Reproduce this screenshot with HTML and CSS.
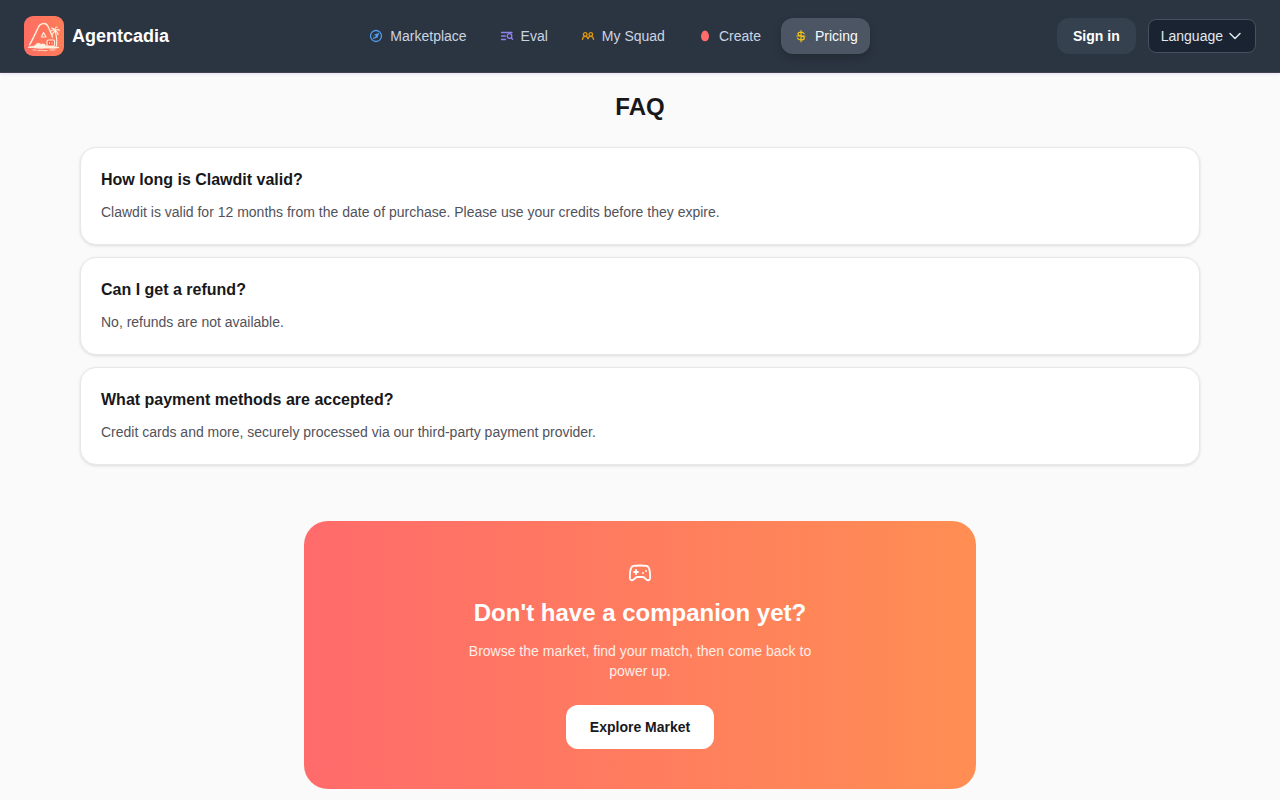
FILE: index.html
```html
<!DOCTYPE html>
<html lang="en">
<head>
<meta charset="utf-8">
<meta name="viewport" content="width=device-width, initial-scale=1">
<title>Agentcadia – Pricing</title>
<link rel="stylesheet" href="styles.css">
</head>
<body>
<header class="header">
  <a class="brand" href="#">
    <svg class="logo" viewBox="0 0 40 40" fill="none" stroke="#fff0df" stroke-linecap="round" stroke-linejoin="round" aria-hidden="true">
      <defs><linearGradient id="logo-fill" x1="0" y1="0" x2="1" y2="0"><stop stop-color="#ff6e63"/><stop offset="1" stop-color="#ff7d58"/></linearGradient></defs>
      <rect width="40" height="40" rx="9" fill="url(#logo-fill)" stroke="none"/>
      <path d="M5.500 29C8.500 24 12 16 14.500 11C16 7 21.500 6.500 23.500 9.500C25.500 13 27 17 28.500 21" stroke-width="1.400"/>
      <path d="M17.300 21L19.500 16.500L22 21Z" stroke-width="1.100"/>
      <path d="M31 15C32.500 19 33 25 32.500 30M31 15C29.500 13.500 28 14 27 15M31 15C30 12.500 28.500 12 27.500 12M31 15C31 12 32 11 33 11M31 15C32.500 13 34.500 13.500 35.500 14.500M31 15C33 15.500 34 17 34 18.500M31 15C29.500 16 28.500 17 28.500 18.500" stroke-width="1.100"/>
      <path d="M11 30C12 27 15 26.500 17 28.500C19 27.500 21 28 22 30C26 31 30 30 35 31.500C30 33 25 31.500 21 32C15 33 10 31 4 31.500C6 30 9 30.500 11 30Z" fill="#fff0df" stroke-width=".8"/>
      <rect x="23" y="24" width="7.500" height="6" rx="1.500" fill="#f86651" stroke-width="1.100"/>
      <path d="M25.500 26.800v.6M28 26.800v.6" stroke-width="1"/>
      <path d="M9 34h3M14 34.500c3-1 6 1 9 0M26 34h5" stroke-width=".8"/>
    </svg>
    <span class="brand-name">Agentcadia</span>
  </a>
  <nav class="nav" aria-label="Main">
    <a class="nav-link" href="#">
      <svg class="nav-icon blue" viewBox="-1 0 14 14" fill="none" stroke="currentColor" stroke-width="1.300" aria-hidden="true"><circle cx="7" cy="7" r="5.500"/><path d="M10.300 3.700L8.600 8.600L3.700 10.300L5.400 5.400Z" fill="currentColor" stroke="none"/><path d="M5.500 5.500L6.900 6.900L4.600 9.200Z" fill="#2b3441" stroke="none"/></svg>
      Marketplace
    </a>
    <a class="nav-link" href="#">
      <svg class="nav-icon violet" viewBox="-1 0 14 14" fill="none" stroke="currentColor" stroke-width="1.300" stroke-linecap="round" aria-hidden="true"><path d="M1.500 3.500h10.500M1.500 7h3.800M1.500 10.500h4M11.200 8.800l1.300 1.500"/><circle cx="9.500" cy="7" r="2.300"/></svg>
      Eval
    </a>
    <a class="nav-link" href="#">
      <svg class="nav-icon amber" viewBox="-1 0 14 14" fill="none" stroke="currentColor" stroke-width="1.300" stroke-linecap="round" aria-hidden="true"><circle cx="4.200" cy="5.400" r="1.800"/><circle cx="9.800" cy="5.400" r="1.800"/><path d="M1.500 10.400c.2-2 1.200-3 2.700-3s2.500 1 2.800 2.800c.3-1.800 1.300-2.800 2.800-2.800s2.500 1 2.700 3"/></svg>
      My Squad
    </a>
    <a class="nav-link" href="#">
      <svg class="nav-icon coral" viewBox="-1 0 14 14" fill="currentColor" aria-hidden="true"><path d="M7 1.500C4.900 1.500 3 4.500 3 7.500C3 10.300 4.800 12.300 7 12.300S11 10.300 11 7.500C11 4.500 9.100 1.500 7 1.500Z"/></svg>
      Create
    </a>
    <a class="nav-link active" href="#" aria-current="page">
      <svg class="nav-icon gold" viewBox="0 0 14 14" fill="none" stroke="currentColor" stroke-width="1.200" stroke-linecap="round" aria-hidden="true"><path d="M8 1.500v11.300M11 4.700C10.700 3.700 9.700 3.200 7.900 3.200C6 3.200 4.900 3.900 4.900 5.100C4.900 7.800 11.300 6.400 11.300 8.900C11.300 10.300 10 10.900 8 10.900C6 10.900 4.900 10.200 4.600 9.200M3.800 7h8.200"/></svg>
      Pricing
    </a>
  </nav>
  <div class="actions">
    <button class="sign-in" type="button">Sign in</button>
    <button class="language" type="button" aria-haspopup="listbox">Language
      <svg class="chevron" viewBox="0 0 16 16" fill="none" stroke="currentColor" stroke-width="1.500" stroke-linecap="round" stroke-linejoin="round" aria-hidden="true"><path d="M3 5.500l5 5 5-5"/></svg>
    </button>
  </div>
</header>
<main class="main">
  <section class="faq">
    <h2 class="faq-title">FAQ</h2>
    <article class="card">
      <h3 class="question">How long is Clawdit valid?</h3>
      <p class="answer">Clawdit is valid for 12 months from the date of purchase. Please use your credits before they expire.</p>
    </article>
    <article class="card">
      <h3 class="question">Can I get a refund?</h3>
      <p class="answer">No, refunds are not available.</p>
    </article>
    <article class="card">
      <h3 class="question">What payment methods are accepted?</h3>
      <p class="answer">Credit cards and more, securely processed via our third-party payment provider.</p>
    </article>
  </section>
  <section class="cta">
    <svg class="cta-icon" viewBox="0 0 24 24" fill="none" stroke="currentColor" stroke-width="1.800" stroke-linecap="round" stroke-linejoin="round" aria-hidden="true"><path d="M5.500 4.900C3.500 5.300 2.800 7 2.400 9.500C1.900 13 1.700 16.500 2.100 18C2.600 19.600 4.400 19.600 5.700 18.500L7.500 16.800C8.200 16.200 8.800 16 9.700 16H14.300C15.200 16 15.800 16.200 16.500 16.800L18.300 18.500C19.600 19.600 21.400 19.600 21.900 18C22.300 16.500 22.100 13 21.600 9.500C21.200 7 20.500 5.300 18.500 4.900C16 4.600 8 4.600 5.500 4.900Z"/><path d="M8 9v4M6 11h4"/><path d="M15 12h.01M18 10h.01"/></svg>
    <h2 class="cta-title">Don't have a companion yet?</h2>
    <p class="cta-text">Browse the market, find your match, then come back to power up.</p>
    <a class="cta-button" href="#">Explore Market</a>
  </section>
</main>
</body>
</html>
```
FILE: styles.css
```css
* {
  box-sizing: border-box;
}

body {
  margin: 0;
  background: #fafafa;
  color: #18181b;
  font-family: "Liberation Sans", Arial, sans-serif;
  font-size: 14px;
  line-height: 20px;
}

h2, h3, p {
  margin: 0;
}

a {
  color: inherit;
  text-decoration: none;
}

button {
  font: inherit;
  cursor: pointer;
}

.header {
  display: flex;
  align-items: center;
  justify-content: space-between;
  padding: 16px 24px;
  background: #2b3441;
  border-bottom: 1px solid #41424f;
  box-shadow: 0 1px 3px #8b7cf633;
}

.brand {
  display: flex;
  align-items: center;
  gap: 8px;
}

.logo {
  width: 40px;
  height: 40px;
}

.brand-name {
  color: #ffffff;
  font-size: 18px;
  font-weight: 700;
  line-height: 28px;
}

.nav {
  display: flex;
  gap: 8px;
}

.nav-link {
  display: flex;
  align-items: center;
  gap: 8px;
  padding: 8px 12px;
  border-radius: 12px;
  color: #cbd5e1;
}

.nav-link.active {
  background: #4b5563;
  color: #f8fafc;
  box-shadow: 0 4px 8px #0000002e;
}

.nav-icon {
  width: 14px;
  height: 14px;
  overflow: visible;
}

.blue { color: #4f9df0; }
.violet { color: #9181ed; }
.amber { color: #dc970f; }
.coral { color: #ff6b6b; }
.gold { color: #f2c314; }

.actions {
  display: flex;
  align-items: center;
  gap: 12px;
}

.sign-in {
  padding: 8px 16px;
  border: 0;
  border-radius: 12px;
  background: #364150;
  color: #ffffff;
  font-weight: 700;
}

.language {
  display: flex;
  align-items: center;
  gap: 4px;
  padding: 6px 12px;
  border: 1px solid #475060;
  border-radius: 8px;
  background: #1a2332;
  color: #e2e8f0;
}

.chevron {
  width: 16px;
  height: 16px;
}

.main {
  display: flex;
  flex-direction: column;
  gap: 56px;
  max-width: 1152px;
  margin: 0 auto;
  padding: 18px 16px 8px;
}

.faq {
  display: flex;
  flex-direction: column;
  gap: 12px;
}

.faq-title {
  margin-bottom: 12px;
  font-size: 24px;
  line-height: 32px;
  text-align: center;
}

.card {
  padding: 20px;
  border: 1px solid #e8e8ea;
  border-radius: 16px;
  background: #ffffff;
  box-shadow: 0 1px 3px #0000001f;
}

.question {
  margin-bottom: 8px;
  font-size: 16px;
  line-height: 24px;
}

.answer {
  color: #52525b;
  line-height: 24px;
}

.cta {
  display: flex;
  flex-direction: column;
  align-items: center;
  width: 100%;
  max-width: 672px;
  margin: 0 auto;
  padding: 40px;
  border-radius: 24px;
  background: linear-gradient(90deg, #ff6b6b, #ff8e53);
  color: #ffffff;
  text-align: center;
}

.cta-icon {
  width: 24px;
  height: 24px;
  margin-bottom: 12px;
}

.cta-title {
  margin-bottom: 12px;
  font-size: 24px;
  line-height: 32px;
}

.cta-text {
  max-width: 384px;
  margin-bottom: 24px;
  color: #ffede7;
}

.cta-button {
  padding: 12px 24px;
  border-radius: 12px;
  background: #ffffff;
  color: #18181b;
  font-weight: 700;
}
```
